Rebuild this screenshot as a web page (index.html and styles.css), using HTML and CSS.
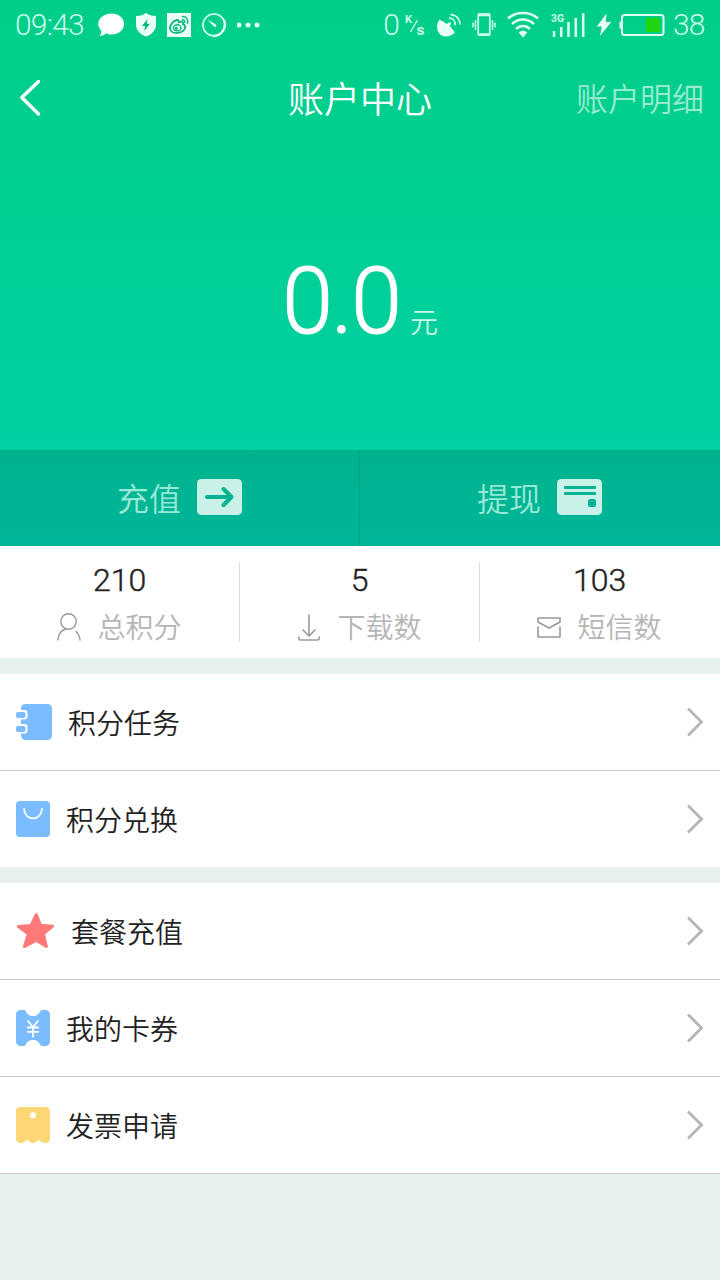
FILE: index.html
```
<!DOCTYPE html>
<html lang="zh-CN">
<head>
    <meta charset="UTF-8">
    <meta name="viewport" content="width=device-width, initial-scale=1.0">
    <title>账户中心</title>
    <link rel="stylesheet" href="styles.css">
</head>
<body>
    <!-- Top -->
    <div class="top">
        <div class="status-bar">
            <div class="status-left">
                <span class="time">09:43</span>
                <svg width="27" height="26" viewBox="0 0 27 26"><path fill="#fff" d="M13.500 1.500C20.500 1.500 26 6 26 12s-5.500 10.500-12.500 10.500c-2 0-4-.4-5.500-1.200C6.500 23 4 24 1.500 24 2.800 22.800 3.500 21 3.400 18.800 1.500 17 .3 14.600.3 12 .3 6 6.500 1.500 13.500 1.500z"/></svg>
                <svg width="22" height="26" viewBox="0 0 22 26"><path fill="#eafff6" d="M11 .8C13.500 3 17 4 21 4v9c0 5.500-4.500 9.500-10 11.500C5.500 22.500 1 18.500 1 13V4c4 0 7.500-1 10-3.200z"/><path fill="#00b67a" d="M12.500 7 7 14h3.200l-1 5L15 11.800h-3.300z"/></svg>
                <svg width="24" height="26" viewBox="0 0 24 26"><path fill="#eafff6" d="M0 1h24v24H0z"/><g fill="none" stroke="#00b67a"><path stroke-width="1.800" d="M10 8c-4 .8-7.300 5-7 8.500.3 3 3.800 4.700 7.700 4.400 4.300-.3 7.700-3 7.500-6-.1-1.600-1-2.400-2.200-2.700.5-2.300-1-3.200-4-2 .4-1.300-.6-2.400-2-2.200z"/><ellipse cx="10.200" cy="15.800" rx="3.800" ry="3" stroke-width="1.400"/><path stroke-width="1.500" d="M14.800 4.700c4-.7 7 2.800 5.700 7M14.800 7.900c2.200-.4 3.500 1.200 2.800 3.100"/></g><circle cx="9.300" cy="16.300" r="1.500" fill="#00b67a"/></svg>
                <svg width="26" height="26" viewBox="0 0 26 26"><circle cx="13" cy="13" r="11" fill="none" stroke="#dffff3" stroke-width="1.600"/><path fill="none" stroke="#dffff3" stroke-width="2.400" d="M23 8c3 8-3 16.500-11 16"/><path fill="#dffff3" d="M6.500 7.500 15 12.500a1.500 1.500 0 0 1-2 2.200z"/></svg>
                <svg width="24" height="26" viewBox="0 0 24 26"><g fill="#dffff3"><circle cx="2" cy="13" r="2.500"/><circle cx="11" cy="13" r="2.500"/><circle cx="20" cy="13" r="2.500"/></g></svg>
            </div>
            <div class="status-right">
                <span class="speed">0</span>
                <svg class="rate" width="22" height="26" viewBox="0 0 22 26"><text x="1" y="11" font-size="11" textLength="7" lengthAdjust="spacingAndGlyphs">K</text><path stroke="#c9fdea" stroke-width="1.400" d="M6.500 20 13.500 8"/><text x="12.500" y="23" font-size="15" textLength="8" lengthAdjust="spacingAndGlyphs">s</text></svg>
                <svg class="dish" width="26" height="26" viewBox="0 0 26 26"><path fill="#eafff6" d="M3.500 7.500 11 12l2.500-2 1.800 1.500-1.500 2.500 5.200 6.500C13 26.500 5.500 25 3 21 0 17 .5 11.500 3.500 7.500z"/><path fill="none" stroke="#c9fdea" stroke-width="1.800" d="M13 6.200c4 0 6.300 3 6.300 7M14.500 2.500c5.500.3 9.500 4.300 9.500 10"/></svg>
                <svg class="vibrate" width="24" height="26" viewBox="0 0 24 26"><g fill="none" stroke="#c9fdea"><rect x="6.200" y="2" width="11.600" height="21" rx="1" stroke-width="1.800"/><path stroke-width="2.600" d="M6 3h12M6 22.500h12"/><path stroke-width="1.500" d="M3.500 8v10M20.500 8v10M1 10.500v5M23 10.500v5"/></g></svg>
                <svg class="wifi" width="32" height="28" viewBox="0 0 32 28"><g fill="none" stroke="#dffff3" stroke-width="2.500"><path d="M1 7.500C9 .2 23 .2 31 7.500M5 13c6.500-6 15.500-6 22 0M9 18c4-4 10-4 14 0"/></g><path fill="#dffff3" d="M11.700 21.500c2.600-2.200 6-2.200 8.600 0L16 26.500z"/></svg>
                <svg class="signal" width="36" height="28" viewBox="0 0 36 28"><text x="0" y="11" font-size="11" textLength="13" lengthAdjust="spacingAndGlyphs">3G</text><path fill="none" stroke="#dffff3" stroke-width="2.500" d="M3 26v-6M10.200 26v-10M17.500 26V11M24.800 26V7M32.200 26V2"/></svg>
                <svg class="bolt" width="16" height="26" viewBox="0 0 16 26"><path fill="#eafff6" d="M10.500 1.500.8 14.500h5L4 24 15.200 10H9.800z"/></svg>
                <svg class="battery" width="46" height="26" viewBox="0 0 46 26"><rect x="3" y="3" width="41.500" height="20" rx="2.500" fill="none" stroke="#dffff3" stroke-width="2"/><path stroke="#dffff3" stroke-width="1.500" d="M1.200 9.500v7"/><path fill="#1fd510" d="M27 6h14v14H27z"/></svg>
                <span class="percent">38</span>
            </div>
        </div>

        <div class="navbar">
            <a class="back" href="#"><svg width="24" height="38" viewBox="0 0 24 38"><path fill="none" stroke="#fff" stroke-width="3.400" stroke-linecap="round" stroke-linejoin="round" d="M20.500 2.500 3.800 18.500l16.700 16.500"/></svg></a>
            <h1 class="title">账户中心</h1>
            <a class="detail" href="#">账户明细</a>
        </div>

        <div class="balance">
            <span class="amount">0.0</span>
            <span class="unit">元</span>
        </div>

        <div class="actions">
            <a class="action" href="#">
                <span>充值</span>
                <svg width="45" height="36" viewBox="0 0 45 36"><rect width="45" height="36" rx="4.500" fill="#c9f1e7"/><path fill="none" stroke="#00b292" stroke-width="4" stroke-linecap="round" stroke-linejoin="round" d="M10 18h24M26.500 10l8 8-8 8"/></svg>
            </a>
            <a class="action" href="#">
                <span>提现</span>
                <svg width="45" height="36" viewBox="0 0 45 36"><rect width="45" height="36" rx="4.500" fill="#c9f1e7"/><g fill="#00b292"><rect x="7" y="7" width="32" height="3" rx="1"/><rect x="7" y="13" width="32" height="3" rx="1"/><rect x="31" y="20" width="8" height="8" rx="2.500"/></g></svg>
            </a>
        </div>
    </div>

    <!-- Stats -->
    <div class="stats">
        <div class="stat">
            <div class="num">210</div>
            <div class="label"><svg width="24" height="28" viewBox="0 0 24 28"><g fill="none" stroke="#999" stroke-width="1.400" stroke-linecap="round"><circle cx="11.500" cy="8.500" r="7.700"/><path d="M.8 27c.6-6.500 4-10 8.500-11.200M19 18.500c2.200 2 3.700 5 4 8.500"/></g></svg><span>总积分</span></div>
        </div>
        <div class="stat">
            <div class="num">5</div>
            <div class="label"><svg width="24" height="28" viewBox="0 0 24 28"><path fill="none" stroke="#999" stroke-width="1.600" stroke-linecap="round" stroke-linejoin="round" d="M12 2v21M6 17l6 6 6-6M1.800 24v1.500q0 1.500 1.500 1.500h17.400q1.500 0 1.500-1.500V24"/></svg><span>下载数</span></div>
        </div>
        <div class="stat">
            <div class="num">103</div>
            <div class="label"><svg width="24" height="28" viewBox="0 0 24 28"><path fill="none" stroke="#999" stroke-width="1.600" stroke-linejoin="round" stroke-linecap="round" d="M1 9V5h22v4l-11 6zM1 14v10h22V14"/></svg><span>短信数</span></div>
        </div>
    </div>

    <!-- Menu -->
    <ul class="menu">
        <li>
            <svg width="36" height="36" viewBox="0 0 36 36"><rect x="5" width="31" height="36" rx="4.500" fill="#7abcff"/><path fill="#fff" d="M5 6h3.500q3 0 3 3v3.500q0 3-3 3H5zM5 20h3.500q3 0 3 3v3.500q0 3-3 3H5z"/><g fill="#7abcff"><rect y="8" width="9.500" height="6" rx="2"/><rect y="22" width="9.500" height="6" rx="2"/></g></svg>
            <span>积分任务</span>
            <svg class="arrow" width="18" height="32" viewBox="0 0 18 32"><path d="M2 2.500 15.500 16 2 29.500"/></svg>
        </li>
        <li>
            <svg width="34" height="36" viewBox="0 0 34 36"><rect width="34" height="36" rx="4" fill="#7abcff"/><path fill="none" stroke="#fff" stroke-width="1.800" stroke-linecap="round" d="M8 8c1 12.500 17 12.500 18 0"/></svg>
            <span>积分兑换</span>
            <svg class="arrow" width="18" height="32" viewBox="0 0 18 32"><path d="M2 2.500 15.500 16 2 29.500"/></svg>
        </li>
    </ul>

    <ul class="menu last">
        <li>
            <svg width="39" height="36" viewBox="0 0 39 36"><path fill="#ff7978" stroke="#ff7978" stroke-width="3" stroke-linejoin="round" d="M20.200 1.700 24.600 12.300l12 .9-9.200 7.700 3 12.600-10.200-6.200-11.700 6.200 3.800-12.600-9.900-7.300 12.800-1.200z"/></svg>
            <span>套餐充值</span>
            <svg class="arrow" width="18" height="32" viewBox="0 0 18 32"><path d="M2 2.500 15.500 16 2 29.500"/></svg>
        </li>
        <li>
            <svg width="34" height="36" viewBox="0 0 34 36"><path fill="#7abcff" d="M5 0h4c2.500 5.300 5 6 8 6s5.500-.7 8-6h4q5 0 5 5v26q0 5-5 5h-4c-2.500-5.300-5-6-8-6s-5.500.7-8 6H5q-5 0-5-5V5q0-5 5-5z"/><path fill="none" stroke="#fff" stroke-width="1.800" d="M11.500 10.500 17 17l5.500-6.500M17 17v10.500M11 17.500h12M11 21.800h12"/></svg>
            <span>我的卡券</span>
            <svg class="arrow" width="18" height="32" viewBox="0 0 18 32"><path d="M2 2.500 15.500 16 2 29.500"/></svg>
        </li>
        <li>
            <svg width="34" height="36" viewBox="0 0 34 36"><path fill="#fdd776" d="M4.500 0h25Q34 0 34 4.500V31.500c0 2.500-2 4.500-4.500 4.500-3 0-5-1.200-6.800-3.200-1.600 2-3.400 3.200-5.700 3.200s-4.100-1.200-5.700-3.200C9.500 34.800 7.500 36 4.500 36 2 36 0 34 0 31.500V4.500Q0 0 4.500 0z"/><circle cx="17" cy="8.200" r="3" fill="#fff"/></svg>
            <span>发票申请</span>
            <svg class="arrow" width="18" height="32" viewBox="0 0 18 32"><path d="M2 2.500 15.500 16 2 29.500"/></svg>
        </li>
    </ul>
</body>
</html>
```
FILE: styles.css
```
* {
    box-sizing: border-box;
}
body {
    margin: 0;
    min-height: 1280px;
    background-color: #e7f0ed;
    font-family: Roboto, "Noto Sans CJK SC", sans-serif;
    color: #222;
}
a {
    color: inherit;
    text-decoration: none;
}
svg {
    display: block;
    flex-shrink: 0;
}
.top {
    height: 546px;
    background: linear-gradient(#00ce87, #00d0a2 450px);
    display: flex;
    flex-direction: column;
    color: #fff;
    font-weight: 350;
}

/* status bar */
.status-bar {
    height: 50px;
    padding: 0 15px;
    display: flex;
    justify-content: space-between;
    align-items: center;
    font-size: 30px;
    font-weight: 300;
    line-height: 50px;
    color: #c9fdea;
}
.status-left, .status-right {
    display: flex;
    align-items: center;
}
.status-left {
    gap: 10px;
}
.time {
    width: 73px;
    letter-spacing: -0.8px;
}
.speed {
    margin-right: 4px;
}
.rate {
    margin-right: 10px;
}
.rate text, .signal text {
    fill: #c9fdea;
    font-weight: 700;
}
.dish {
    margin-right: 10px;
}
.vibrate {
    margin-right: 11px;
}
.wifi {
    margin-right: 12px;
}
.signal {
    margin-right: 9px;
}
.bolt {
    margin-right: 7px;
}
.battery {
    margin-right: 8px;
}
.percent {
    width: 32px;
    letter-spacing: -0.8px;
}

/* title bar */
.navbar {
    height: 96px;
    padding: 0 16px 0 18px;
    display: grid;
    grid-template-columns: 1fr auto 1fr;
    align-items: center;
}
.title {
    margin: -3px 2px 0 0;
    font-size: 36px;
    font-weight: 350;
}
.detail {
    justify-self: end;
    margin-top: -3px;
    font-size: 32px;
    color: #99ebd0;
}

.balance {
    height: 304px;
    display: flex;
    justify-content: center;
    align-items: baseline;
    gap: 10px;
    padding-top: 100px;
}
.amount {
    font-size: 92px;
    line-height: 112px;
    letter-spacing: -2px;
    -webkit-text-stroke: 1px #fff;
}
.unit {
    font-size: 28px;
    color: #ccf6e9;
}

.actions {
    height: 96px;
    display: flex;
    background: linear-gradient(#00b38e, #00b698);
}
.action {
    width: 50%;
    display: flex;
    justify-content: center;
    align-items: center;
    gap: 16px;
    padding-bottom: 2px;
    font-size: 32px;
    color: #99e9d7;
    border-right: 1px solid transparent;
}
.action:first-child {
    border-right-color: #00a082;
}
.action span {
    margin-top: -1px;
}

/* stats */
.stats {
    height: 112px;
    padding: 16px 0;
    display: flex;
    background-color: #fff;
}
.stat {
    width: 240px;
    display: flex;
    flex-direction: column;
    align-items: center;
    border-right: 1px solid #ddd;
}
.stat:last-child {
    border-right-color: transparent;
}
.num {
    font-size: 32px;
    line-height: 36px;
    font-weight: 350;
    -webkit-text-stroke: 0.4px #222;
}
.label {
    display: flex;
    align-items: center;
    gap: 16px;
    margin-top: 10px;
    font-size: 28px;
    line-height: 42px;
    font-weight: 350;
    color: #b5b5b5;
}
.label svg {
    margin-top: -5px;
}

/* menu */
.menu {
    list-style: none;
    margin: 16px 0 0;
    padding: 0;
    background-color: #fff;
}
.menu li {
    height: 97px;
    padding: 0 16px;
    display: flex;
    align-items: center;
    gap: 16px;
    font-size: 28px;
    font-weight: 350;
    border-bottom: 1px solid #ccc;
}
.menu:not(.last) li:last-child {
    height: 96px;
    border-bottom: none;
}
.arrow {
    margin-left: auto;
}
.arrow path {
    fill: none;
    stroke: #b5b5b5;
    stroke-width: 2.8;
}
```
